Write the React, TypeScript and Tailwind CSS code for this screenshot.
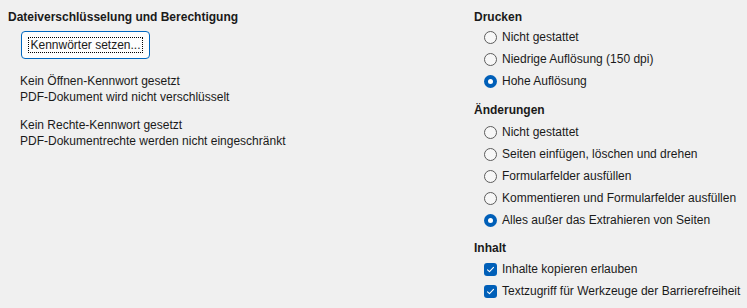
const font = { fontFamily: '"Segoe UI", "Liberation Sans", Arial, sans-serif' };

function Radio({ label, checked }: { label: string; checked?: boolean }) {
  return (
    <div className="flex h-[22px] items-center pl-[10px]">
      {checked ? (
        <span className="flex h-[13px] w-[13px] items-center justify-center rounded-full bg-[#005fb8]">
          <span className="h-[5px] w-[5px] rounded-full bg-white" />
        </span>
      ) : (
        <span className="h-[13px] w-[13px] rounded-full border border-[#5c5c5c] bg-[#f7f7f7]" />
      )}
      <span className="ml-[5px]">{label}</span>
    </div>
  );
}

function Check({ label }: { label: string }) {
  return (
    <div className="flex h-[22px] items-center pl-[10px]">
      <span className="flex h-[13px] w-[13px] items-center justify-center rounded-[3px] bg-[#005fb8]">
        <svg width="9" height="9" viewBox="0 0 9 9" fill="none">
          <path d="M1.5 4.8 L3.5 6.6 L7.5 2.4" stroke="white" strokeWidth="1.1" strokeLinecap="round" strokeLinejoin="round" />
        </svg>
      </span>
      <span className="ml-[5px]">{label}</span>
    </div>
  );
}

export default function App() {
  return (
    <div className="flex h-[308px] w-[747px] bg-[#f0f0f0] text-[12px] leading-4 text-[#1a1a1a]" style={font}>
      {/* left: encryption */}
      <div className="flex w-[474px] flex-col pl-[8px] pt-[9px]">
        <div className="h-4 font-bold">Dateiverschlüsselung und Berechtigung</div>
        <button className="ml-[13px] mt-[6px] flex h-[28px] w-[129px] items-center justify-center rounded-[4px] border border-[#0067c0] bg-[#fdfdfd]">
          <span className="border border-dotted border-black px-px leading-[14px]">Kennwörter setzen...</span>
        </button>
        <div className="ml-[12px] mt-[14px]">
          <div>Kein Öffnen-Kennwort gesetzt</div>
          <div>PDF-Dokument wird nicht verschlüsselt</div>
        </div>
        <div className="ml-[12px] mt-[12px]">
          <div>Kein Rechte-Kennwort gesetzt</div>
          <div>PDF-Dokumentrechte werden nicht eingeschränkt</div>
        </div>
      </div>

      {/* right: permissions */}
      <div className="flex flex-col pt-[9px]">
        <div className="h-4 font-bold">Drucken</div>
        <div className="mt-px">
          <Radio label="Nicht gestattet" />
          <Radio label="Niedrige Auflösung (150 dpi)" />
          <Radio label="Hohe Auflösung" checked />
        </div>
        <div className="mt-[10px] h-4 font-bold">Änderungen</div>
        <div className="mt-[3px]">
          <Radio label="Nicht gestattet" />
          <Radio label="Seiten einfügen, löschen und drehen" />
          <Radio label="Formularfelder ausfüllen" />
          <Radio label="Kommentieren und Formularfelder ausfüllen" />
          <Radio label="Alles außer das Extrahieren von Seiten" checked />
        </div>
        <div className="mt-[9px] h-4 font-bold">Inhalt</div>
        <div className="mt-[2px]">
          <Check label="Inhalte kopieren erlauben" />
          <Check label="Textzugriff für Werkzeuge der Barrierefreiheit" />
        </div>
      </div>
    </div>
  );
}
